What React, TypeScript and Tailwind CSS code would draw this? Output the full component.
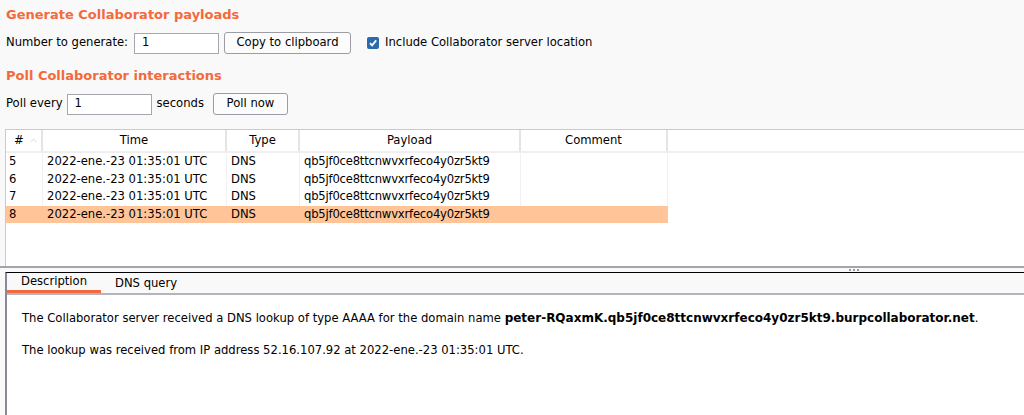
import { ChevronUp } from "lucide-react";

const rows = [
  { n: "5", selected: false },
  { n: "6", selected: false },
  { n: "7", selected: false },
  { n: "8", selected: true },
];

const cols = [
  { label: "#", w: "w-[37px]" },
  { label: "Time", w: "w-[184px]" },
  { label: "Type", w: "w-[73px]" },
  { label: "Payload", w: "w-[221px]" },
  { label: "Comment", w: "w-[147px]" },
];

const TIME = "2022-ene.-23 01:35:01 UTC";
const PAYLOAD = "qb5jf0ce8ttcnwvxrfeco4y0zr5kt9";

function TextBox({ width }: { width: string }) {
  return (
    <div className={`${width} flex h-[21px] items-center border border-[#a6a6ae] bg-white px-[7px]`}>1</div>
  );
}

function Button({ label, width }: { label: string; width: string }) {
  return (
    <div
      className={`${width} flex h-[22px] items-center justify-center rounded-[3px] border border-[#9c9ca4] bg-[#fcfcfc]`}
    >
      {label}
    </div>
  );
}

export default function App() {
  return (
    <div
      className="flex h-[415px] w-[1024px] flex-col overflow-hidden bg-[#f9f9f9] text-[11.6px] text-black"
      style={{ fontFamily: '"DejaVu Sans", sans-serif' }}
    >
      <div className="px-[6px]">
        <h2 className="mt-[7px] h-[16px] text-[13px] leading-[16px] font-bold text-[#f36a3c]">
          Generate Collaborator payloads
        </h2>
        <div className="mt-[9px] flex h-[22px] items-center">
          <span>Number to generate:</span>
          <div className="ml-[6px]">
            <TextBox width="w-[85px]" />
          </div>
          <div className="ml-[5px]">
            <Button label="Copy to clipboard" width="w-[127px]" />
          </div>
          <div className="ml-[16px] flex h-[12px] w-[12px] items-center justify-center rounded-[2px] bg-[#2d69ad]">
            <svg width="10" height="10" viewBox="0 0 10 10">
              <path d="M2 5.2 L4.1 7.4 L8.2 2.4" fill="none" stroke="white" strokeWidth="1.8" />
            </svg>
          </div>
          <span className="ml-[6px]">Include Collaborator server location</span>
        </div>
        <h2 className="mt-[14px] h-[16px] text-[13px] leading-[16px] font-bold text-[#f36a3c]">
          Poll Collaborator interactions
        </h2>
        <div className="mt-[9px] flex h-[22px] items-center">
          <span>Poll every</span>
          <div className="ml-[4px]">
            <TextBox width="w-[85px]" />
          </div>
          <span className="ml-[5px]">seconds</span>
          <div className="ml-[9px]">
            <Button label="Poll now" width="w-[75px]" />
          </div>
        </div>
      </div>

      <div className="mt-[14px] ml-[5px] flex h-[137px] flex-col border-t border-l border-[#c9c9d3] bg-white">
        <div className="flex h-[23px] border-b-2 border-[#efeff1]">
          {cols.map((c, i) => (
            <div
              key={c.label}
              className={`${c.w} flex items-center border-r-2 border-[#e4e4e6] ${i === 0 ? "justify-start pl-[8px]" : "justify-center"}`}
            >
              {c.label}
              {i === 0 && <ChevronUp className="ml-[4px] h-[11px] w-[11px] text-[#c4c4c8]" strokeWidth={1.5} />}
            </div>
          ))}
        </div>
        {rows.map((r) => (
          <div
            key={r.n}
            className={`flex h-[17.5px] w-[662px] items-center ${r.selected ? "bg-[#ffc599]" : ""}`}
          >
            <div className={`flex h-full w-[37px] items-center pl-[3px] ${r.selected ? "" : "border-r border-[#f1f1f3]"}`}>{r.n}</div>
            <div className={`flex h-full w-[184px] items-center pl-[4px] ${r.selected ? "" : "border-r border-[#f1f1f3]"}`}>{TIME}</div>
            <div className={`flex h-full w-[73px] items-center pl-[4px] ${r.selected ? "" : "border-r border-[#f1f1f3]"}`}>DNS</div>
            <div className={`flex h-full w-[221px] items-center pl-[4px] tracking-[-0.2px] ${r.selected ? "" : "border-r border-[#f1f1f3]"}`}>{PAYLOAD}</div>
            <div className={`h-full w-[147px] ${r.selected ? "" : "border-r border-[#f1f1f3]"}`} />
          </div>
        ))}
      </div>

      <div className="relative h-[6px] border-t-2 border-[#a4a4ac]">
        <div className="absolute top-[1px] left-[849px] flex gap-[2px]">
          <span className="h-[2px] w-[2px] bg-[#9a9a9a]" />
          <span className="h-[2px] w-[2px] bg-[#9a9a9a]" />
          <span className="h-[2px] w-[2px] bg-[#9a9a9a]" />
        </div>
      </div>

      <div className="ml-[5px] flex flex-1 flex-col border-t border-l-2 border-t-black border-l-[#8a899c]">
        <div className="flex h-[22px] items-end border-b-2 border-[#b4b4bc] bg-[#f9f9f9]">
          <div className="flex h-full w-[94px] items-center justify-center border-b-[3px] border-[#f36a3c] pt-[1px]">
            Description
          </div>
          <div className="flex h-full items-center pl-[14px] pt-[1px]">DNS query</div>
        </div>
        <div className="flex-1 bg-white pt-[15px] pl-[15px]">
          <p className="h-[16px] leading-[16px]">
            The Collaborator server received a DNS lookup of type AAAA for the domain name{" "}
            <span className="text-[12px] font-bold">peter-RQaxmK.qb5jf0ce8ttcnwvxrfeco4y0zr5kt9.burpcollaborator.net</span>.
          </p>
          <p className="mt-[16px] h-[16px] leading-[16px]">
            The lookup was received from IP address 52.16.107.92 at 2022-ene.-23 01:35:01 UTC.
          </p>
        </div>
      </div>
    </div>
  );
}
